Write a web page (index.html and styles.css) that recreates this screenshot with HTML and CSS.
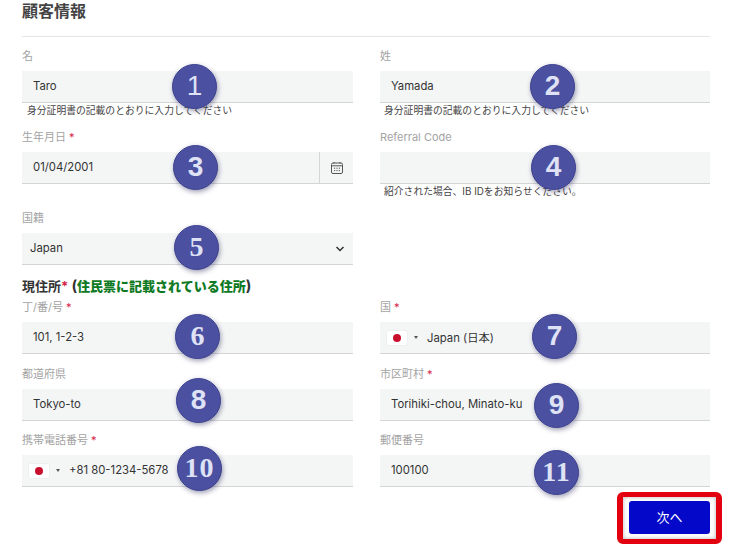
FILE: index.html
```html
<!DOCTYPE html>
<html lang="ja">
  <head>
    <meta charset="UTF-8" />
    <title>顧客情報</title>
    <link rel="stylesheet" href="styles.css">
  </head>
  <body>
    <div class="container">
      <h2 class="title">顧客情報</h2>

      <div class="row row-name">
        <div class="field">
          <label>名</label>
          <div class="control"><span class="value">Taro</span><span class="badge b1">1</span></div>
          <p class="hint">身分証明書の記載のとおりに入力してください</p>
        </div>
        <div class="field">
          <label>姓</label>
          <div class="control"><span class="value">Yamada</span><span class="badge b2">2</span></div>
          <p class="hint">身分証明書の記載のとおりに入力してください</p>
        </div>
      </div>

      <div class="row row-birth">
        <div class="field">
          <label>生年月日 <i>*</i></label>
          <div class="control">
            <span class="value">01/04/2001</span>
            <span class="addon">
              <svg width="14" height="14" viewBox="0 0 14 14" fill="none" stroke="#555" stroke-width="1">
                <rect x="1.5" y="2" width="11" height="10.5" rx="1.5" />
                <path d="M1.5 4.8h11M4 1v1.5M10 1v1.5" />
                <path d="M4 7.2h1.2M6.4 7.2h1.2M8.8 7.2h1.2M4 9.6h1.2M6.4 9.6h1.2M8.8 9.6h1.2" />
              </svg>
            </span>
            <span class="badge b3">3</span>
          </div>
        </div>
        <div class="field">
          <label>Referral Code</label>
          <div class="control"><span class="badge b4">4</span></div>
          <p class="hint">紹介された場合、IB IDをお知らせください。</p>
        </div>
      </div>

      <div class="row row-nation">
        <div class="field">
          <label>国籍</label>
          <div class="control">
            <span class="value select-value">Japan</span>
            <svg class="chevron" width="10" height="6" viewBox="0 0 10 6" fill="none" stroke="#333" stroke-width="1.5">
              <path d="M1.5 1l3.5 3.5L8.500 1" />
            </svg>
            <span class="badge b5">5</span>
          </div>
        </div>
      </div>

      <h3 class="address">現住所<i>*</i> <span class="paren">(</span><b>住民票に記載されている住所</b><span class="paren">)</span></h3>

      <div class="row row-addr">
        <div class="field">
          <label>丁/番/号 <i>*</i></label>
          <div class="control"><span class="value">101, 1-2-3</span><span class="badge b6">6</span></div>
        </div>
        <div class="field">
          <label>国 <i>*</i></label>
          <div class="control">
            <span class="flag"><span class="dot"></span></span><span class="caret"></span>
            <span class="value phone">Japan (日本)</span>
            <span class="badge b7">7</span>
          </div>
        </div>
      </div>

      <div class="row row-addr row-short">
        <div class="field">
          <label>都道府県</label>
          <div class="control"><span class="value">Tokyo-to</span><span class="badge b8">8</span></div>
        </div>
        <div class="field">
          <label>市区町村 <i>*</i></label>
          <div class="control"><span class="value">Torihiki-chou, Minato-ku</span><span class="badge b9">9</span></div>
        </div>
      </div>

      <div class="row row-addr">
        <div class="field">
          <label>携帯電話番号 <i>*</i></label>
          <div class="control">
            <span class="flag"><span class="dot"></span></span><span class="caret"></span>
            <span class="value phone">+81 80-1234-5678</span>
            <span class="badge b10">10</span>
          </div>
        </div>
        <div class="field">
          <label>郵便番号</label>
          <div class="control"><span class="value">100100</span><span class="badge b11">11</span></div>
        </div>
      </div>

      <div class="actions">
        <a class="btn">次へ</a>
      </div>
    </div>
  </body>
</html>
```

FILE: styles.css
```css
body {
  margin: 0;
  min-height: 100vh;
  background-color: #fff;
  font-family: "Inter", "Noto Sans CJK JP", sans-serif;
  color: #333;
}
.container {
  width: 688px;
  margin-left: 22px;
}
.title {
  margin: 0;
  height: 37px;
  box-sizing: border-box;
  border-bottom: 1px solid #e6e6e6;
  font-size: 16px;
  line-height: 23px;
  font-weight: 700;
  color: #444;
}
.row {
  display: grid;
  grid-template-columns: 331px 330px;
  column-gap: 27px;
}
.row-name {
  height: 91px;
  box-sizing: border-box;
  padding-top: 10px;
}
.row-birth {
  height: 81px;
}
.row-nation {
  height: 68px;
}
.row-addr {
  height: 67px;
}
.row-addr.row-short {
  height: 66px;
}
label {
  display: block;
  height: 17px;
  margin-bottom: 7px;
  font-size: 11px;
  line-height: 19px;
  color: #a3a3a3;
}
label i,
.address i {
  font-style: normal;
  color: #d6234a;
}
.control {
  position: relative;
  display: flex;
  align-items: center;
  height: 31px;
  background-color: #f4f6f6;
  border-bottom: 1px solid #d5d5d5;
  font-size: 11.3px;
  color: #333;
}
.value {
  padding-left: 11px;
  padding-bottom: 2px;
}
.select-value {
  padding-left: 8px;
}
.hint {
  margin: 1px 0 0 5px;
  font-size: 9.8px;
  line-height: 14px;
  color: #444;
}
.field + .field .hint {
  margin-left: 4px;
}
.addon {
  position: absolute;
  right: 0;
  top: 0;
  bottom: 0;
  width: 33px;
  display: flex;
  align-items: center;
  justify-content: center;
  border-left: 1px solid #d5d5d5;
}
.chevron {
  position: absolute;
  right: 8px;
  top: 13px;
}
.flag {
  display: flex;
  align-items: center;
  justify-content: center;
  width: 20px;
  height: 14px;
  margin-left: 7px;
  background-color: #fff;
  border-radius: 1px;
  box-shadow: 0 0 1px rgba(0, 0, 0, 0.25);
}
.dot {
  width: 8px;
  height: 8px;
  border-radius: 50%;
  background-color: #c8102e;
}
.caret {
  margin-left: 7px;
  border-left: 2px solid transparent;
  border-right: 2px solid transparent;
  border-top: 3px solid #555;
}
.value.phone {
  padding-left: 9px;
}
.address {
  margin: 0;
  height: 21px;
  font-size: 13px;
  line-height: 18px;
  font-weight: 700;
  color: #333;
}
.address b {
  color: #0f7a24;
}
.paren {
  font-size: 15px;
}
.actions {
  display: flex;
  justify-content: flex-end;
  padding-top: 3px;
}
.btn {
  position: relative;
  width: 81px;
  height: 33px;
  line-height: 33px;
  text-align: center;
  font-size: 13px;
  color: #fff;
  background-color: #0408c8;
  border-radius: 3px;
}
.btn::after {
  content: "";
  position: absolute;
  left: -12px;
  right: -12px;
  top: -9px;
  bottom: -10px;
  border: solid #e3000f;
  border-width: 5px 6px;
  border-radius: 6px;
  box-shadow: inset 0 0 4px rgba(0, 0, 0, 0.3);
}
.badge {
  position: absolute;
  width: 45px;
  height: 45px;
  box-sizing: border-box;
  border: 1px solid #3c4190;
  border-radius: 50%;
  background-color: #4b50a0;
  box-shadow: 1px 2px 5px rgba(40, 40, 90, 0.45);
  color: #dfe2f5;
  font-family: "Liberation Sans", sans-serif;
  font-size: 28px;
  line-height: 42px;
  text-align: center;
}
.b5, .b6, .b10, .b11 {
  font-family: "Liberation Serif", serif;
  font-weight: 700;
}
.b2, .b3, .b4, .b7, .b8, .b9 {
  font-weight: 700;
}
.b10, .b11 {
  letter-spacing: 1px;
}
.b1 { left: 150px; top: -7px; }
.b2 { left: 150px; top: -7px; }
.b3 { left: 151px; top: -7px; }
.b4 { left: 151px; top: -7px; }
.b5 { left: 152px; top: -8px; }
.b6 { left: 153px; top: -8px; }
.b7 { left: 152px; top: -8px; }
.b8 { left: 154px; top: -11px; }
.b9 { left: 154px; top: -6px; }
.b10 { left: 155px; top: -9px; }
.b11 { left: 154px; top: -5px; }
```
